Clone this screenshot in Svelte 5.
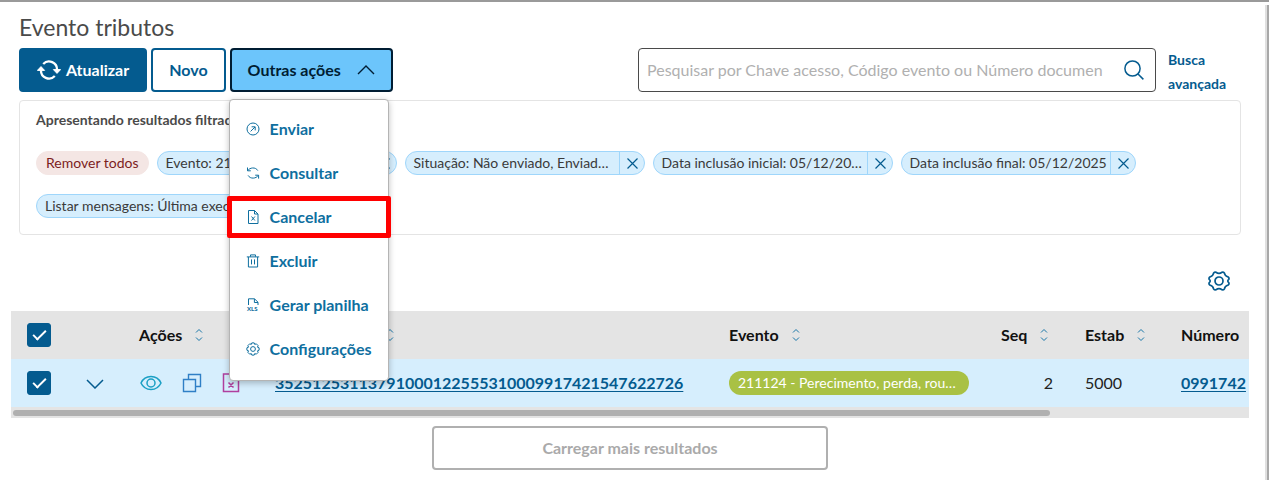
<script>
  let menuOpen = true;
  let search = '';
  let allSelected = true;
  let rowSelected = true;

  const actions = [
    { icon: 'send', label: 'Enviar' },
    { icon: 'sync', label: 'Consultar' },
    { icon: 'cancel', label: 'Cancelar', marked: true },
    { icon: 'trash', label: 'Excluir' },
    { icon: 'xls', label: 'Gerar planilha' },
    { icon: 'gear', label: 'Configurações' }
  ];

  let filters = [
    'Evento: 211124 - Perecimento, perda, roubo',
    'Situação: Não enviado, Enviado, Erro',
    'Data inclusão inicial: 05/12/2025',
    'Data inclusão final: 05/12/2025',
    'Listar mensagens: Última execução'
  ];

  const columns = [
    { label: 'Ações', key: 'actions' },
    { label: 'Chave Acesso', key: 'key' },
    { label: 'Evento', key: 'event' },
    { label: 'Seq', key: 'seq' },
    { label: 'Estab', key: 'estab' },
    { label: 'Número', key: 'number' }
  ];

  function removeFilter(filter) {
    filters = filters.filter((f) => f !== filter);
  }

  function toggleAll() {
    rowSelected = allSelected;
  }
</script>

<div class="screen">
  <main class="content">
    <h1>Evento tributos</h1>

    <div class="toolbar">
      <div class="buttons">
        <button class="btn primary">
          <svg width="24" height="20" viewBox="0 0 24 20" fill="none" stroke="currentColor" stroke-width="2.3">
            <path d="M6.2 4A8 8 0 0 1 20 10v1M17.8 16A8 8 0 0 1 4 10V9" />
            <path d="M16.4 9.6h7.2L20 13.4zM.4 10.4h7.2L4 6.6z" fill="currentColor" stroke-width="1" stroke-linejoin="round" />
          </svg>
          Atualizar
        </button>
        <button class="btn">Novo</button>
        <div class="dropdown">
          <button class="btn active" aria-expanded={menuOpen} on:click={() => (menuOpen = !menuOpen)}>
            Outras ações
            <svg width="18" height="10" viewBox="0 0 18 10" fill="none" stroke="currentColor" stroke-width="1.4">
              <path d="M1 9 9 1l8 8" />
            </svg>
          </button>
          {#if menuOpen}
            <div class="menu" role="menu">
              {#each actions as action}
                <button class="menu-item" class:marked={action.marked} role="menuitem">
                  <svg width="14" height="14" viewBox="0 0 14 14" fill="none" stroke="currentColor">
                    {#if action.icon === 'send'}
                      <circle cx="7" cy="7" r="6" />
                      <path d="M4.6 9.4 9 5M5.6 4.8h3.6v3.6" />
                    {:else if action.icon === 'sync'}
                      <path d="M1.5 1.5v3.3h3.3M1.7 4.6C3.6 1.6 9.6.6 11.8 4.6M12.6 12.6V9.2H9.2M12.3 9.4c-2 3.2-8 4-10.2 0" />
                    {:else if action.icon === 'cancel'}
                      <path d="M2.5.5h6L12 4v9.5H2.5zM8.5.5V4H12M5.5 6.5l3.4 4M8.9 6.5l-3.4 4" />
                    {:else if action.icon === 'trash'}
                      <path d="M.8 2.9h12.4M4.5 2.7V.9h5v1.8M2.4 3v10h9.2V3M5.5 5.4v5M8.5 5.4v5" />
                    {:else if action.icon === 'xls'}
                      <path d="M2.5 7V.8h6L12 4.2V7M8.4 1v3.5H12" />
                      <text x="1" y="13">XLS</text>
                    {:else}
                      <circle cx="7" cy="7" r="2.4" />
                      <path d="M5.8.9h2.4l.5 1.5 1.6-.6 1.8 1.8-.6 1.6 1.6.6v2.4l-1.6.6.6 1.6-1.8 1.8-1.6-.6-.5 1.5H5.8l-.5-1.5-1.6.6-1.8-1.8.6-1.6L.9 8.2V5.8l1.6-.6-.6-1.6 1.8-1.8 1.6.6z" stroke-linejoin="round" />
                    {/if}
                  </svg>
                  {action.label}
                </button>
              {/each}
            </div>
          {/if}
        </div>
      </div>

      <div class="search-area">
        <div class="search">
          <input
            type="text"
            aria-label="Pesquisar"
            placeholder="Pesquisar por Chave acesso, Código evento ou Número documen"
            bind:value={search}
          />
          <button class="icon-btn" aria-label="Pesquisar">
            <svg width="22" height="22" viewBox="0 0 22 22" fill="none" stroke="currentColor" stroke-width="1.5">
              <circle cx="9.5" cy="9.5" r="7.6" />
              <path d="m15 15 5.4 5.4" />
            </svg>
          </button>
        </div>
        <a class="advanced" href="#busca">Busca avançada</a>
      </div>
    </div>

    <section class="filters">
      <p>Apresentando resultados filtrados por:</p>
      <div class="chips">
        <button class="chip remove" on:click={() => (filters = [])}>Remover todos</button>
        {#each filters as filter}
          <span class="chip">
            <span class="chip-text">{filter}</span>
            <button aria-label="Remover filtro" on:click={() => removeFilter(filter)}>
              <svg width="11" height="11" viewBox="0 0 11 11" fill="none" stroke="currentColor" stroke-width="1.2">
                <path d="m.5.5 10 10M10.5.5l-10 10" />
              </svg>
            </button>
          </span>
        {/each}
      </div>
    </section>

    <div class="table-tools">
      <button class="icon-btn" aria-label="Configurar colunas">
        <svg width="22" height="20" viewBox="0 0 22 20" fill="none" stroke="currentColor" stroke-width="1.7" stroke-linejoin="round">
          <circle cx="11" cy="10" r="4" />
          <path d="M8 1.2Q11 3.4 14 1.2q1.4-.4 2.4.8.4 3 3.8 4 1.2 1 .6 2.4-2 1.6 0 3.2.6 1.4-.6 2.4-3.4 1-3.8 4-1 1.2-2.4.8Q11 16.6 8 18.8q-1.4.4-2.4-.8-.4-3-3.8-4-1.2-1-.6-2.4 2-1.6 0-3.2Q.6 7 1.8 6q3.4-1 3.8-4 1-1.2 2.4-.8z" />
        </svg>
      </button>
    </div>

    <div class="grid">
      <div class="grid-view">
        <table>
          <colgroup>
            <col class="col-small" />
            <col class="col-small" />
            {#each columns as column}
              <col class="col-{column.key}" />
            {/each}
          </colgroup>
          <thead>
            <tr>
              <th><input type="checkbox" aria-label="Selecionar todos" bind:checked={allSelected} on:change={toggleAll} /></th>
              <th></th>
              {#each columns as column}
                <th>
                  <span class="th-label">
                    {column.label}
                    <svg width="8" height="12" viewBox="0 0 8 12" fill="none" stroke="currentColor">
                      <path d="m1 3.5 3-3 3 3M1 8.5l3 3 3-3" />
                    </svg>
                  </span>
                </th>
              {/each}
            </tr>
          </thead>
          <tbody>
            <tr>
              <td><input type="checkbox" aria-label="Selecionar evento" bind:checked={rowSelected} /></td>
              <td>
                <button class="icon-btn expand" aria-label="Expandir">
                  <svg width="18" height="10" viewBox="0 0 18 10" fill="none" stroke="currentColor" stroke-width="1.5">
                    <path d="m1 1 8 8 8-8" />
                  </svg>
                </button>
              </td>
              <td>
                <div class="row-actions">
                  <button class="icon-btn view" aria-label="Visualizar">
                    <svg width="23" height="16" viewBox="0 0 23 16" fill="none" stroke="currentColor" stroke-width="1.5">
                      <path d="M2 8C6-.6 18-.6 22 8 18 16.6 6 16.6 2 8z" />
                      <circle cx="12" cy="8" r="4" />
                    </svg>
                  </button>
                  <button class="icon-btn copy" aria-label="Copiar">
                    <svg width="20" height="20" viewBox="0 0 20 20" fill="none" stroke="currentColor" stroke-width="1.4">
                      <path d="M1.5 6.5h12v12h-12zM6.5 6V1.5h12v12H14" />
                    </svg>
                  </button>
                  <button class="icon-btn void" aria-label="Cancelar">
                    <svg width="18" height="20" viewBox="0 0 18 20" fill="none" stroke="currentColor" stroke-width="1.5">
                      <path d="M1.5 1h10l5 5v12.5h-15zM11.5 1v5h5M6.5 9.5l5 5M11.5 9.5l-5 5" />
                    </svg>
                  </button>
                </div>
              </td>
              <td><a href="#chave">35251253113791000122555310009917421547622726</a></td>
              <td><span class="tag">211124 - Perecimento, perda, roubo ou furto</span></td>
              <td class="right">2</td>
              <td>5000</td>
              <td><a href="#numero">0991742</a></td>
            </tr>
          </tbody>
        </table>
      </div>
      <div class="scroll-track"><div class="scroll-thumb"></div></div>
    </div>

    <button class="load-more">Carregar mais resultados</button>
  </main>
  <div class="page-scroll"></div>
</div>

<style>
  :global(body) {
    background: #fff;
  }

  .screen {
    display: flex;
    min-height: 100vh;
    box-sizing: border-box;
    border-top: 2px solid #9a9a9a;
    font-family: Lato, 'Open Sans', sans-serif;
    font-size: 16px;
    line-height: 24px;
    color: #222;
    overflow: hidden;
  }

  .content {
    flex: 1;
    min-width: 0;
    padding: 9px 16px 10px 11px;
    box-sizing: border-box;
  }

  .page-scroll {
    flex: none;
    width: 2px;
    margin-top: 3px;
    background: #a8a8a8;
    border-left: 2px solid #e0e0e0;
  }

  button,
  input {
    font: inherit;
  }

  button {
    cursor: pointer;
  }

  svg {
    flex: none;
    display: block;
  }

  h1 {
    margin: 0 8px;
    font-size: 23px;
    line-height: 32px;
    font-weight: 400;
    color: #4a4a4a;
  }

  .toolbar {
    display: grid;
    grid-template-columns: 1fr 1fr;
    margin: 5px 8px 8px;
  }

  .buttons {
    display: flex;
    gap: 4px;
  }

  .btn {
    display: flex;
    align-items: center;
    gap: 5px;
    height: 44px;
    padding: 0 16px;
    border: 2px solid #045b8f;
    border-radius: 4px;
    background: #fff;
    color: #045b8f;
    font-weight: 700;
  }

  .btn.primary {
    background: #045b8f;
    color: #fff;
  }

  .btn.active {
    gap: 16px;
    background: #6cc5fb;
    border-color: #001d33;
    color: #001d33;
  }

  .dropdown {
    position: relative;
  }

  .menu {
    position: absolute;
    top: 51px;
    left: -1px;
    z-index: 10;
    width: 160px;
    box-sizing: border-box;
    padding: 7px 0 9px;
    background: #fff;
    border: 1px solid #b4b4b4;
    border-radius: 4px;
    box-shadow: 0 2px 6px rgba(0, 0, 0, 0.25);
  }

  .menu-item {
    position: relative;
    display: flex;
    align-items: center;
    gap: 10px;
    width: 100%;
    height: 44px;
    padding: 0 16px;
    border: none;
    background: none;
    color: #0f6f9f;
    font-weight: 700;
    white-space: nowrap;
  }

  .menu-item text {
    font-size: 6px;
    font-weight: 900;
    fill: currentColor;
    stroke: none;
  }

  .menu-item.marked::after {
    content: '';
    position: absolute;
    inset: 1px -3px;
    border: 5px solid #f00;
    border-radius: 2px;
  }

  .search-area {
    display: flex;
    gap: 12px;
    padding-left: 8px;
    min-width: 0;
  }

  .search {
    display: flex;
    align-items: center;
    flex: 1;
    min-width: 0;
    height: 44px;
    box-sizing: border-box;
    padding: 0 10px 0 8px;
    border: 1px solid #4a4a4a;
    border-radius: 4px;
    color: #045b8f;
  }

  .search input {
    flex: 1;
    min-width: 0;
    padding: 0;
    border: none;
    outline: none;
    background: none;
    color: #222;
  }

  .search input::placeholder {
    color: #b0b0b0;
    opacity: 1;
  }

  .icon-btn {
    padding: 0;
    border: none;
    background: none;
    color: inherit;
  }

  .advanced {
    width: 73px;
    height: 44px;
    font-size: 14px;
    font-weight: 700;
    color: #045b8f;
    text-decoration: none;
  }

  .filters {
    margin: 0 8px;
    padding: 7px 16px 16px;
    border: 1px solid #e4e4e4;
    border-radius: 4px;
    font-size: 14px;
  }

  .filters p {
    margin: 0 0 19px;
    font-weight: 700;
    color: #4a4a4a;
  }

  .chips {
    display: flex;
    flex-wrap: wrap;
    gap: 19px 8px;
  }

  .chip {
    display: flex;
    max-width: 240px;
    height: 24px;
    box-sizing: border-box;
    border: 1px solid #9fd6fb;
    border-radius: 12px;
    background: #d6eefd;
    color: #3a3a3a;
    line-height: 22px;
  }

  .chip-text {
    padding: 0 3px 0 8px;
    white-space: nowrap;
    overflow: hidden;
    text-overflow: ellipsis;
  }

  .chip button {
    display: flex;
    flex: none;
    align-items: center;
    width: 25px;
    padding: 0 6px 0 7px;
    border: none;
    border-left: 1px solid #9fd6fb;
    background: none;
    color: #045b8f;
  }

  .chip.remove {
    padding: 0 9px;
    background: #f4e6e4;
    border-color: #f4e6e4;
    color: #7c1d1d;
  }

  .table-tools {
    display: flex;
    justify-content: flex-end;
    padding: 36px 19px 20px;
    color: #045b8f;
  }

  .grid-view {
    overflow: hidden;
  }

  table {
    width: 1480px;
    table-layout: fixed;
    border-collapse: collapse;
  }

  .col-small {
    width: 56px;
  }
  .col-actions {
    width: 136px;
  }
  .col-key {
    width: 454px;
  }
  .col-event {
    width: 272px;
  }
  .col-seq {
    width: 84px;
  }
  .col-estab {
    width: 96px;
  }

  th,
  td {
    height: 48px;
    padding: 0 16px;
    text-align: left;
    white-space: nowrap;
  }

  thead {
    background: #e4e4e4;
    color: #111;
  }

  tbody {
    background: #d6eefd;
  }

  .th-label {
    display: flex;
    align-items: center;
    gap: 13px;
  }

  .th-label svg {
    color: #1976a8;
  }

  td a {
    color: #045b8f;
    font-weight: 700;
    text-underline-offset: 2px;
  }

  .right {
    text-align: right;
  }

  input[type='checkbox'] {
    appearance: none;
    display: grid;
    place-items: center;
    width: 24px;
    height: 24px;
    margin: 0;
    border: 1px solid #045b8f;
    border-radius: 3px;
    background: #fff;
  }

  input[type='checkbox']:checked {
    background: #045b8f;
  }

  input[type='checkbox']:checked::after {
    content: '';
    width: 11px;
    height: 5px;
    border-left: 2px solid #fff;
    border-bottom: 2px solid #fff;
    transform: translateY(-2px) rotate(-45deg);
  }

  .expand {
    margin-left: 3px;
    color: #045b8f;
  }

  .row-actions {
    display: flex;
    align-items: center;
    gap: 20px;
  }

  .view {
    color: #1a9fc4;
  }
  .copy {
    color: #2f7fc6;
  }
  .void {
    color: #b03f9e;
  }

  .tag {
    display: block;
    height: 24px;
    box-sizing: border-box;
    padding: 0 9px;
    border-radius: 12px;
    background: #a9c144;
    color: #fff;
    font-size: 14px;
    line-height: 24px;
    overflow: hidden;
    text-overflow: ellipsis;
  }

  .scroll-track {
    padding: 3px 2px 2px;
    background: #e4e4e4;
  }

  .scroll-thumb {
    width: 84%;
    height: 6px;
    border-radius: 3px;
    background: #b0b0b0;
  }

  .load-more {
    display: block;
    width: 32%;
    height: 44px;
    margin: 8px auto 0;
    border: 2px solid #b0b0b0;
    border-radius: 4px;
    background: #fff;
    color: #aaa;
    font-weight: 700;
  }
</style>
